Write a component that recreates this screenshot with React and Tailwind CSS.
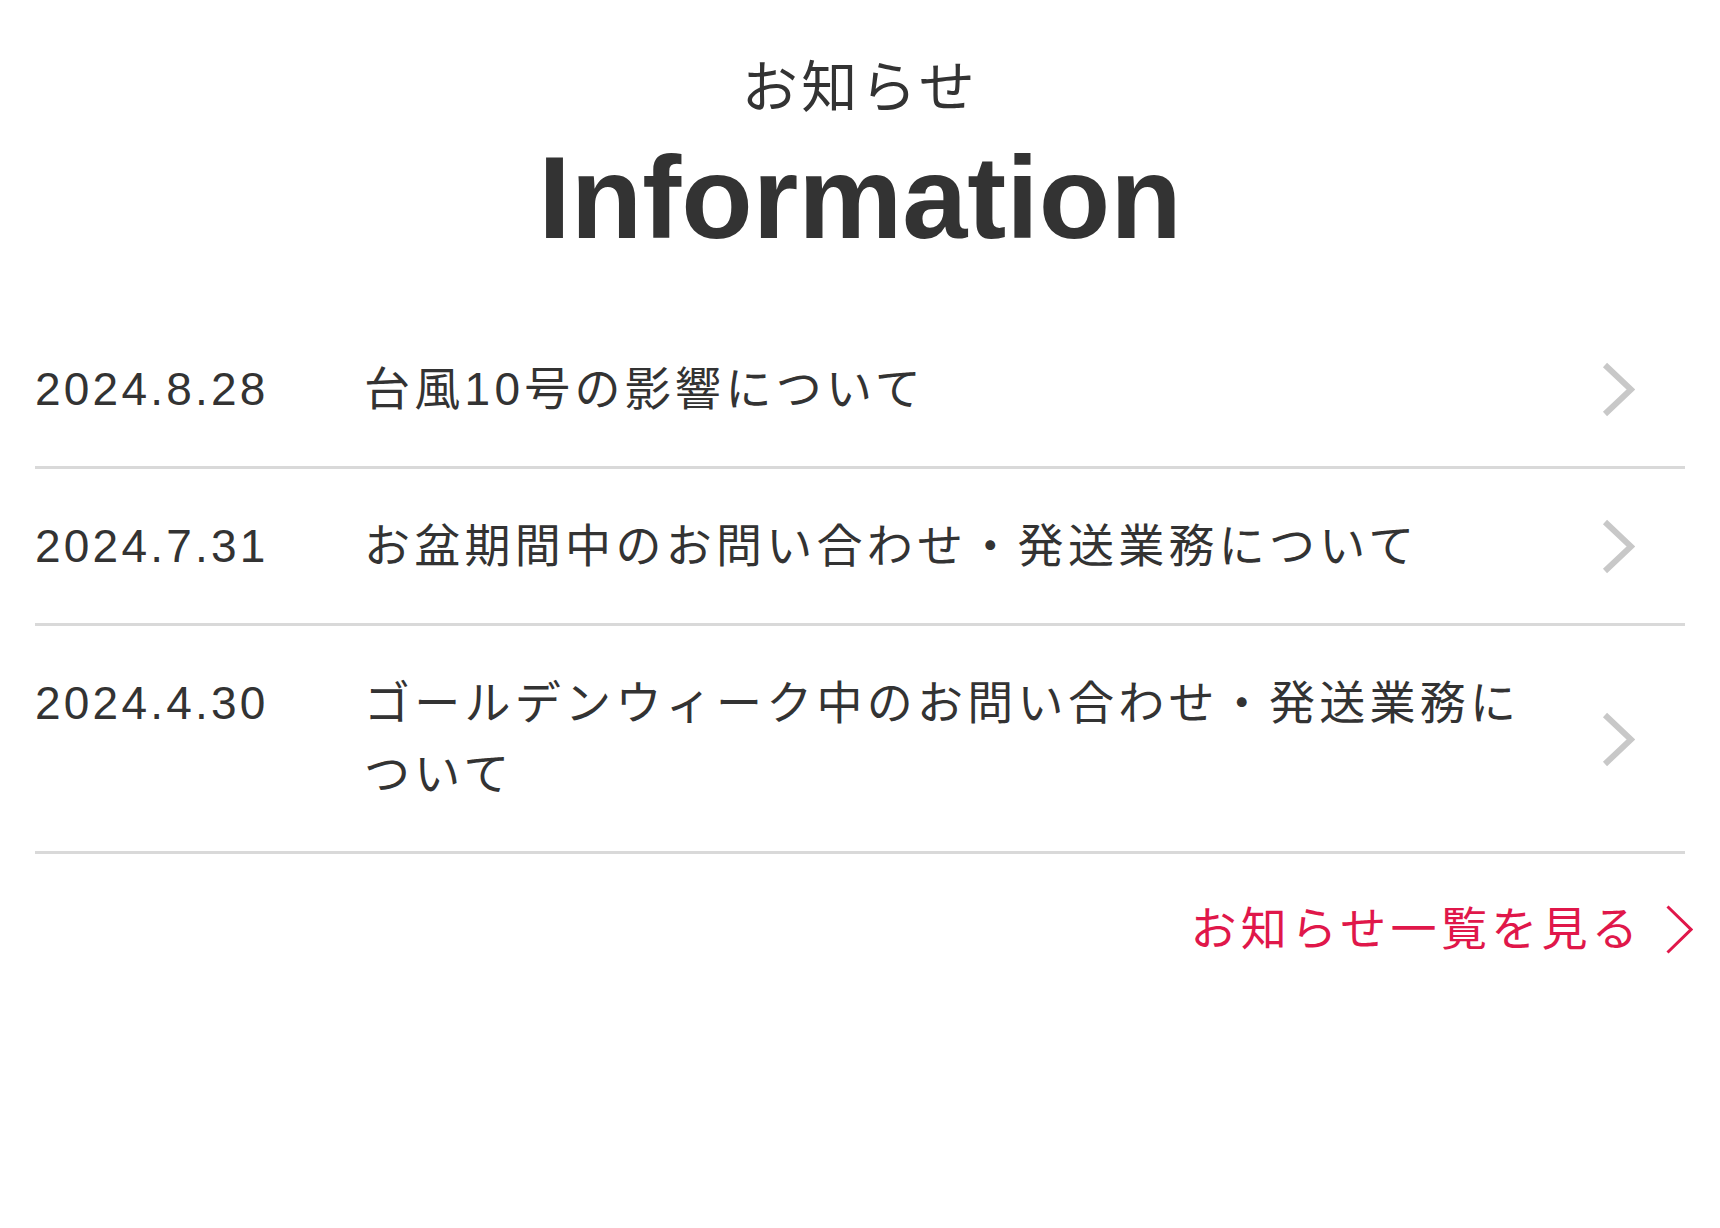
const news = [
  { id: 1, date: '2024.8.28', title: '台風10号の影響について' },
  { id: 2, date: '2024.7.31', title: 'お盆期間中のお問い合わせ・発送業務について' },
  { id: 3, date: '2024.4.30', title: 'ゴールデンウィーク中のお問い合わせ・発送業務について' },
]

function Chevron({ className }) {
  return (
    <svg viewBox="0 0 33 55" className={className} fill="none">
      <path d="M3 3 L29 27.5 L3 52" stroke="#c8c8c8" strokeWidth="6" />
    </svg>
  )
}

export default function App() {
  return (
    <div className="min-h-screen bg-white text-[#333] font-['Liberation_Sans','Noto_Sans_CJK_JP',sans-serif]">
      <section className="px-[35px] pt-[60px] pb-[200px]">
        <div className="text-center">
          <p className="text-[56px] leading-[56px] tracking-[0.06em]">お知らせ</p>
          <h2 className="mt-[23px] text-[117px] leading-none font-bold">Information</h2>
        </div>

        <ul className="mt-[56px]">
          {news.map((item) => (
            <li key={item.id} className="border-b-[3px] border-[#d9d9d9]">
              <a href="#" className="flex items-start pt-[42px] pb-[41px] text-[46px] leading-[71px]">
                <span className="w-[329px] shrink-0 tracking-[0.07em]">{item.date}</span>
                <span className="w-[1168px] shrink-0 tracking-[0.093em]">{item.title}</span>
                <span className="flex flex-1 justify-end self-center pr-[50px]">
                  <Chevron className="w-[33px] h-[55px]" />
                </span>
              </a>
            </li>
          ))}
        </ul>

        <div className="mt-[40px] -mr-[8px] flex justify-end">
          <a href="#" className="flex items-center gap-[24px] text-[46px] leading-[71px] tracking-[0.093em] text-[#e0174a]">
            <span>お知らせ一覧を見る</span>
            <svg viewBox="0 0 27 49" className="w-[27px] h-[49px]" fill="none">
              <path d="M1.5 1.5 L25 24.5 L1.5 47.5" stroke="#e0174a" strokeWidth="3" />
            </svg>
          </a>
        </div>
      </section>
    </div>
  )
}
